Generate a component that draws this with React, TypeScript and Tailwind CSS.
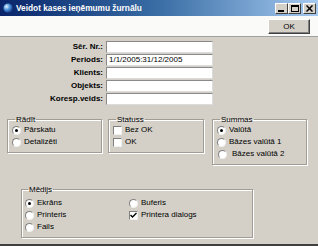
import type { ReactNode } from "react";

function Radio({ checked = false }: { checked?: boolean }) {
  return (
    <span className="relative inline-flex w-[9px] h-[9px] shrink-0 items-center justify-center rounded-full bg-white border border-t-[#808080] border-l-[#808080] border-b-[#f0f0f0] border-r-[#f0f0f0]">
      {checked && <span className="w-[3px] h-[3px] rounded-full bg-black" />}
    </span>
  );
}

function Check({ checked = false }: { checked?: boolean }) {
  return (
    <span className="inline-flex w-[9px] h-[9px] shrink-0 items-center justify-center bg-white border border-t-[#808080] border-l-[#808080] border-b-[#f0f0f0] border-r-[#f0f0f0]">
      {checked && (
        <svg width="7" height="7" viewBox="0 0 7 7">
          <path d="M0.5 3 L2.5 5 L6.5 1" stroke="#000" strokeWidth="1.4" fill="none" />
        </svg>
      )}
    </span>
  );
}

function Option({ control, label, className = "" }: { control: ReactNode; label: string; className?: string }) {
  return (
    <div className={`flex items-center gap-[3px] h-[12px] ${className}`}>
      {control}
      <span className="whitespace-nowrap">{label}</span>
    </div>
  );
}

function Group({ title, className = "", children }: { title: string; className?: string; children: ReactNode }) {
  return (
    <fieldset className={`border border-[#a09d96] shadow-[1px_1px_0_#ffffff,inset_1px_1px_0_#ffffff] ${className}`}>
      <legend className="ml-[3px] px-[1px] text-[8px] leading-[9px]">{title}</legend>
      {children}
    </fieldset>
  );
}

function WinBtn({ children }: { children: ReactNode }) {
  return (
    <div className="w-[13px] h-[11px] flex items-center justify-center bg-[#d4d0c8] border border-t-white border-l-white border-b-[#404040] border-r-[#404040]">
      {children}
    </div>
  );
}

const fields: { label: string; value: string }[] = [
  { label: "Sēr. Nr.:", value: "" },
  { label: "Periods:", value: "1/1/2005:31/12/2005" },
  { label: "Klients:", value: "" },
  { label: "Objekts:", value: "" },
  { label: "Koresp.veids:", value: "" },
];

export default function App() {
  return (
    <div className="w-[318px] h-[246px] flex flex-col bg-[#d4d0c8] border-b-[2px] border-b-[#404040] font-['Liberation_Sans',Arial,sans-serif] text-[8px] text-black overflow-hidden">
      {/* Title bar */}
      <div className="h-[16px] shrink-0 flex items-center bg-gradient-to-r from-[#0a246a] via-[#3a6ea5] to-[#a6caf0] pl-[3px] pr-[2px]">
        <svg width="10" height="10" viewBox="0 0 10 10" className="shrink-0">
          <defs>
            <radialGradient id="g" cx="0.35" cy="0.35" r="0.7">
              <stop offset="0" stopColor="#e8f4ff" />
              <stop offset="0.5" stopColor="#4a90d9" />
              <stop offset="1" stopColor="#1a3f8a" />
            </radialGradient>
          </defs>
          <circle cx="5" cy="5" r="4.6" fill="url(#g)" />
        </svg>
        <span className="ml-[3px] text-white font-bold text-[8.3px] whitespace-nowrap">Veidot kases ieņēmumu žurnālu</span>
        <div className="ml-auto flex items-center">
          <WinBtn>
            <svg width="7" height="7" viewBox="0 0 7 7"><rect x="0" y="5" width="6" height="2" fill="#000" /></svg>
          </WinBtn>
          <WinBtn>
            <svg width="8" height="7" viewBox="0 0 8 7"><rect x="0.5" y="0.5" width="7" height="6" fill="none" stroke="#000" /><rect x="0" y="0" width="8" height="2" fill="#000" /></svg>
          </WinBtn>
          <div className="w-[2px]" />
          <WinBtn>
            <svg width="7" height="7" viewBox="0 0 7 7"><path d="M0.5 0.5 L6.5 6.5 M6.5 0.5 L0.5 6.5" stroke="#000" strokeWidth="1.5" /></svg>
          </WinBtn>
        </div>
      </div>

      {/* Toolbar */}
      <div className="h-[21px] shrink-0 flex justify-end items-start pt-[3px] pr-[8px] bg-[#fafaf8] border-b border-[#a0a0a0]">
        <button className="w-[42px] h-[15px] flex items-center justify-center bg-[#d4d0c8] border border-t-white border-l-white border-b-[#404040] border-r-[#404040] shadow-[inset_-1px_-1px_0_#808080] text-[8px]">
          OK
        </button>
      </div>

      {/* Body */}
      <div className="flex-1 flex flex-col pt-[4px]">
        <div className="grid grid-cols-[106px_107px] gap-y-[1px]">
          {fields.map((f) => (
            <div key={f.label} className="contents">
              <div className="h-[12px] flex items-center justify-end pr-[3px] font-bold whitespace-nowrap">{f.label}</div>
              <div className="h-[12px] flex items-center pl-[2px] bg-white border border-t-[#8a8a8a] border-l-[#8a8a8a] border-b-[#dcdcdc] border-r-[#dcdcdc] whitespace-nowrap">
                {f.value}
              </div>
            </div>
          ))}
        </div>

        <div className="flex items-start mt-[10px] pl-[7px]">
          <Group title="Rādīt" className="w-[95px] pl-[4px] pb-[4px]">
            <Option control={<Radio checked />} label="Pārskatu" />
            <Option control={<Radio />} label="Detalizēti" />
          </Group>
          <Group title="Statuss" className="w-[96px] ml-[6px] pl-[4px] pb-[4px]">
            <Option control={<Check />} label="Bez OK" />
            <Option control={<Check />} label="OK" />
          </Group>
          <Group title="Summas" className="w-[95px] ml-[8px] pl-[4px] pb-[4px]">
            <Option control={<Radio checked />} label="Valūtā" />
            <Option control={<Radio />} label="Bāzes valūtā 1" />
            <Option control={<Radio />} label="Bāzes valūtā 2" className="ml-[1px] gap-[5px]" />
          </Group>
        </div>

        <Group title="Mēdijs" className="w-[232px] ml-[21px] mt-[20px] pl-[3px] pt-[3px] pb-[4px]">
          <div className="grid grid-cols-[104px_1fr]">
            <Option control={<Radio checked />} label="Ekrāns" className="h-[11px]" />
            <Option control={<Radio />} label="Buferis" className="h-[11px]" />
            <Option control={<Radio />} label="Printeris" className="h-[11px]" />
            <Option control={<Check checked />} label="Printera dialogs" className="h-[11px]" />
            <Option control={<Radio />} label="Fails" className="h-[11px]" />
          </div>
        </Group>
      </div>
    </div>
  );
}
